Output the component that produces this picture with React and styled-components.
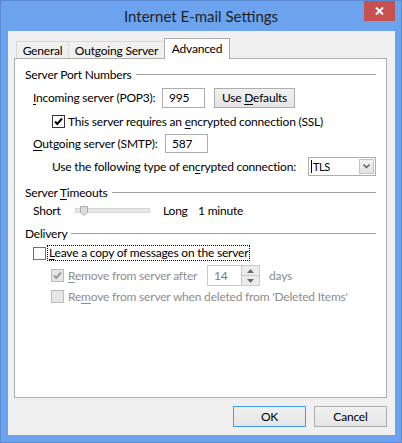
import React from 'react';
import styled, { createGlobalStyle } from 'styled-components';

const GlobalStyle = createGlobalStyle`
    html, body {
        margin: 0;
        padding: 0;
        background: #6ba3ef;
    }

    body {
        font-family: Lato, "Noto Sans", sans-serif;
        font-size: 12px;
        letter-spacing: -0.2px;
        color: #000;
    }
`;

const Window = styled.div`
    width: 402px;
    height: 443px;
    box-sizing: border-box;
    background: #6ba3ef;
    border: 1px solid #5a8ad2;
    display: flex;
    flex-direction: column;
`;

const TitleBar = styled.div`
    height: 30px;
    display: grid;
    grid-template-columns: 1fr auto 1fr;
    align-items: center;
`;

const Title = styled.div`
    grid-column: 2;
    font-size: 15px;
    letter-spacing: 0;
    color: #1f1f1f;
    padding-bottom: 1px;
`;

const CloseButton = styled.div`
    grid-column: 3;
    justify-self: end;
    align-self: start;
    width: 31px;
    height: 20px;
    margin-right: 6px;
    background: #c75050;
    display: flex;
    align-items: center;
    justify-content: center;
`;

const Client = styled.div`
    flex: 1;
    margin: 0 6px 7px 7px;
    padding: 7px 8px 0 6px;
    background: #f0f0f0;
    display: flex;
    flex-direction: column;
`;

const TabStrip = styled.div`
    display: flex;
    align-items: flex-end;
    height: 20px;
    padding-left: 2px;
`;

const Tab = styled.div`
    box-sizing: border-box;
    width: ${(props) => props.$width}px;
    height: ${(props) => (props.$active ? 21 : 17)}px;
    margin-right: -1px;
    margin-bottom: ${(props) => (props.$active ? -1 : 0)}px;
    position: relative;
    z-index: ${(props) => (props.$active ? 1 : 0)};
    border: 1px solid ${(props) => (props.$active ? '#adadad' : '#d9d9d9')};
    border-bottom: none;
    background: ${(props) => (props.$active ? '#fff' : '#f0f0f0')};
    display: flex;
    justify-content: center;
    align-items: ${(props) => (props.$active ? 'flex-start' : 'center')};
    padding-top: ${(props) => (props.$active ? 2 : 0)}px;
    line-height: 15px;
`;

const Page = styled.div`
    box-sizing: border-box;
    height: 340px;
    border: 1px solid #adadad;
    background: #fff;
    padding: 7px 10px 0 10px;
    display: flex;
    flex-direction: column;
`;

const SectionHeader = styled.div`
    display: flex;
    align-items: center;
    height: 16px;
    margin-top: ${(props) => props.$top || 0}px;

    &::after {
        content: '';
        flex: 1;
        height: 1px;
        margin-left: 4px;
        background: #a0a0a0;
    }
`;

const Row = styled.div`
    display: flex;
    align-items: center;
    height: ${(props) => props.$height}px;
    margin-top: ${(props) => props.$top || 0}px;
    padding-left: ${(props) => props.$indent || 0}px;
    color: ${(props) => (props.$disabled ? '#8d8d8d' : '#000')};
`;

const Label = styled.span`
    width: ${(props) => (props.$width ? `${props.$width}px` : 'auto')};
    flex-shrink: 0;
    white-space: pre;
`;

const Key = styled.u`
    text-decoration: underline;
    text-underline-offset: 2px;
`;

const TextBox = styled.div`
    box-sizing: border-box;
    width: ${(props) => props.$width}px;
    height: ${(props) => props.$height}px;
    border: 1px solid #abadb3;
    background: #fff;
    padding-left: 6px;
    display: flex;
    align-items: center;
`;

const Button = styled.div`
    box-sizing: border-box;
    width: ${(props) => props.$width}px;
    height: ${(props) => props.$height}px;
    margin-left: ${(props) => props.$left || 0}px;
    border: 1px solid ${(props) => (props.$default ? '#3c9cf0' : '#adadad')};
    background: linear-gradient(#f0f0f0, #e5e5e5);
    display: flex;
    align-items: center;
    justify-content: center;
`;

const Box = styled.span`
    box-sizing: border-box;
    width: 13px;
    height: 13px;
    flex-shrink: 0;
    margin-right: ${(props) => props.$gap}px;
    border: 1px solid ${(props) => (props.$disabled ? '#bcbcbc' : props.$checked ? '#333' : '#707070')};
    background: ${(props) => (props.$disabled ? '#e6e6e6' : '#fff')};
    display: flex;
    align-items: center;
    justify-content: center;
`;

const FocusLabel = styled.span`
    border: 1px dotted #000;
    padding: 0 1px;
    line-height: 14px;
    white-space: nowrap;
`;

const Combo = styled.div`
    box-sizing: border-box;
    width: 70px;
    height: 19px;
    border: 1px solid #abadb3;
    background: #fff;
    display: flex;
    align-items: stretch;
`;

const ComboText = styled.div`
    flex: 1;
    display: flex;
    align-items: center;
    padding-left: 2px;
    font-size: 11px;
    letter-spacing: -0.5px;

    &::before {
        content: '';
        width: 1px;
        height: 13px;
        background: #000;
        margin-right: 1px;
    }
`;

const ComboButton = styled.div`
    width: 15px;
    margin: 1px;
    border: 1px solid #c4c4c4;
    box-sizing: border-box;
    background: linear-gradient(#f2f2f2, #e2e2e2);
    display: flex;
    align-items: center;
    justify-content: center;
`;

const SliderTrack = styled.div`
    box-sizing: border-box;
    width: 75px;
    height: 5px;
    margin-right: 13px;
    background: #e7e7e7;
    border: 1px solid #d6d6d6;
    display: flex;
    align-items: center;
`;

const Thumb = styled.svg`
    margin-left: 4px;
    flex-shrink: 0;
`;

const Spinner = styled.div`
    box-sizing: border-box;
    width: 53px;
    height: 21px;
    border: 1px solid #c9c9c9;
    background: #fff;
    display: flex;
    margin-right: 9px;
`;

const SpinValue = styled.div`
    flex: 1;
    display: flex;
    align-items: center;
    padding-left: 6px;
    color: #7a7a7a;
`;

const SpinButtons = styled.div`
    width: 17px;
    border-left: 1px solid #c9c9c9;
    display: flex;
    flex-direction: column;
`;

const SpinHalf = styled.div`
    flex: 1;
    background: #ececec;
    border-top: ${(props) => (props.$lower ? '1px solid #c9c9c9' : 'none')};
    display: flex;
    align-items: center;
    justify-content: center;
`;

const Footer = styled.div`
    display: flex;
    justify-content: flex-end;
    gap: 8px;
    margin-top: 8px;
`;

function Check({ checked, disabled, gap }) {
    return (
        <Box $checked={checked} $disabled={disabled} $gap={gap}>
            {checked && (
                <svg width="11" height="11" viewBox="0 0 11 11">
                    <path
                        d="M2 5.5 L4.3 8 L9 2.5"
                        fill="none"
                        stroke={disabled ? '#9a9a9a' : '#000'}
                        strokeWidth="2"
                    />
                </svg>
            )}
        </Box>
    );
}

function App() {
    return (
        <>
            <GlobalStyle />
            <Window>
                <TitleBar>
                    <Title>Internet E-mail Settings</Title>
                    <CloseButton>
                        <svg width="9" height="8" viewBox="0 0 9 8">
                            <path d="M1 0.5 L8 7.5 M8 0.5 L1 7.5" stroke="#fff" strokeWidth="2" />
                        </svg>
                    </CloseButton>
                </TitleBar>
                <Client>
                    <TabStrip>
                        <Tab $width={53}>General</Tab>
                        <Tab $width={97}>Outgoing Server</Tab>
                        <Tab $width={66} $active>Advanced</Tab>
                    </TabStrip>
                    <Page>
                        <SectionHeader><Label>Server Port Numbers</Label></SectionHeader>
                        <Row $height={21} $top={5} $indent={8}>
                            <Label $width={129}><Key>I</Key>ncoming server (POP3):</Label>
                            <TextBox $width={43} $height={20}>995</TextBox>
                            <Button $width={81} $height={20} $left={9}>
                                <Label>Use <Key>D</Key>efaults</Label>
                            </Button>
                        </Row>
                        <Row $height={19} $top={4} $indent={27}>
                            <Check checked gap={3} />
                            <Label>This server requires an <Key>e</Key>ncrypted connection (SSL)</Label>
                        </Row>
                        <Row $height={20} $top={2} $indent={8}>
                            <Label $width={132}><Key>O</Key>utgoing server (SMTP):</Label>
                            <TextBox $width={43} $height={19}>587</TextBox>
                        </Row>
                        <Row $height={22} $top={2} $indent={27}>
                            <Label $width={256}>Use the following type of en<Key>c</Key>rypted connection:</Label>
                            <Combo>
                                <ComboText>TLS</ComboText>
                                <ComboButton>
                                    <svg width="7" height="5" viewBox="0 0 7 5">
                                        <path d="M0.5 0.5 L3.5 3.5 L6.5 0.5" fill="none" stroke="#555" strokeWidth="1.4" />
                                    </svg>
                                </ComboButton>
                            </Combo>
                        </Row>
                        <SectionHeader $top={7}><Label>Server <Key>T</Key>imeouts</Label></SectionHeader>
                        <Row $height={17} $top={2} $indent={8}>
                            <Label $width={42}>Short</Label>
                            <SliderTrack>
                                <Thumb width="8" height="10" viewBox="0 0 8 10">
                                    <path d="M0.5 0.5 H7.5 V6 L4 9.5 L0.5 6 Z" fill="#dcdcdc" stroke="#acacac" />
                                </Thumb>
                            </SliderTrack>
                            <Label $width={35}>Long</Label>
                            <Label>1 minute</Label>
                        </Row>
                        <SectionHeader $top={6}><Label>Delivery</Label></SectionHeader>
                        <Row $height={18} $top={3} $indent={8}>
                            <Check gap={1} />
                            <FocusLabel><Key>L</Key>eave a copy of messages on the server</FocusLabel>
                        </Row>
                        <Row $height={21} $top={3} $indent={26} $disabled>
                            <Check checked disabled gap={4} />
                            <Label $width={139}><Key>R</Key>emove from server after</Label>
                            <Spinner>
                                <SpinValue>14</SpinValue>
                                <SpinButtons>
                                    <SpinHalf>
                                        <svg width="7" height="4" viewBox="0 0 7 4">
                                            <path d="M0 4 L3.5 0 L7 4 Z" fill="#6a6a6a" />
                                        </svg>
                                    </SpinHalf>
                                    <SpinHalf $lower>
                                        <svg width="7" height="4" viewBox="0 0 7 4">
                                            <path d="M0 0 L7 0 L3.5 4 Z" fill="#6a6a6a" />
                                        </svg>
                                    </SpinHalf>
                                </SpinButtons>
                            </Spinner>
                            <Label>days</Label>
                        </Row>
                        <Row $height={17} $top={2} $indent={26} $disabled>
                            <Check disabled gap={4} />
                            <Label>Re<Key>m</Key>ove from server when deleted from 'Deleted Items'</Label>
                        </Row>
                    </Page>
                    <Footer>
                        <Button $width={73} $height={21} $default>OK</Button>
                        <Button $width={73} $height={21}>Cancel</Button>
                    </Footer>
                </Client>
            </Window>
        </>
    );
}

export default App;
